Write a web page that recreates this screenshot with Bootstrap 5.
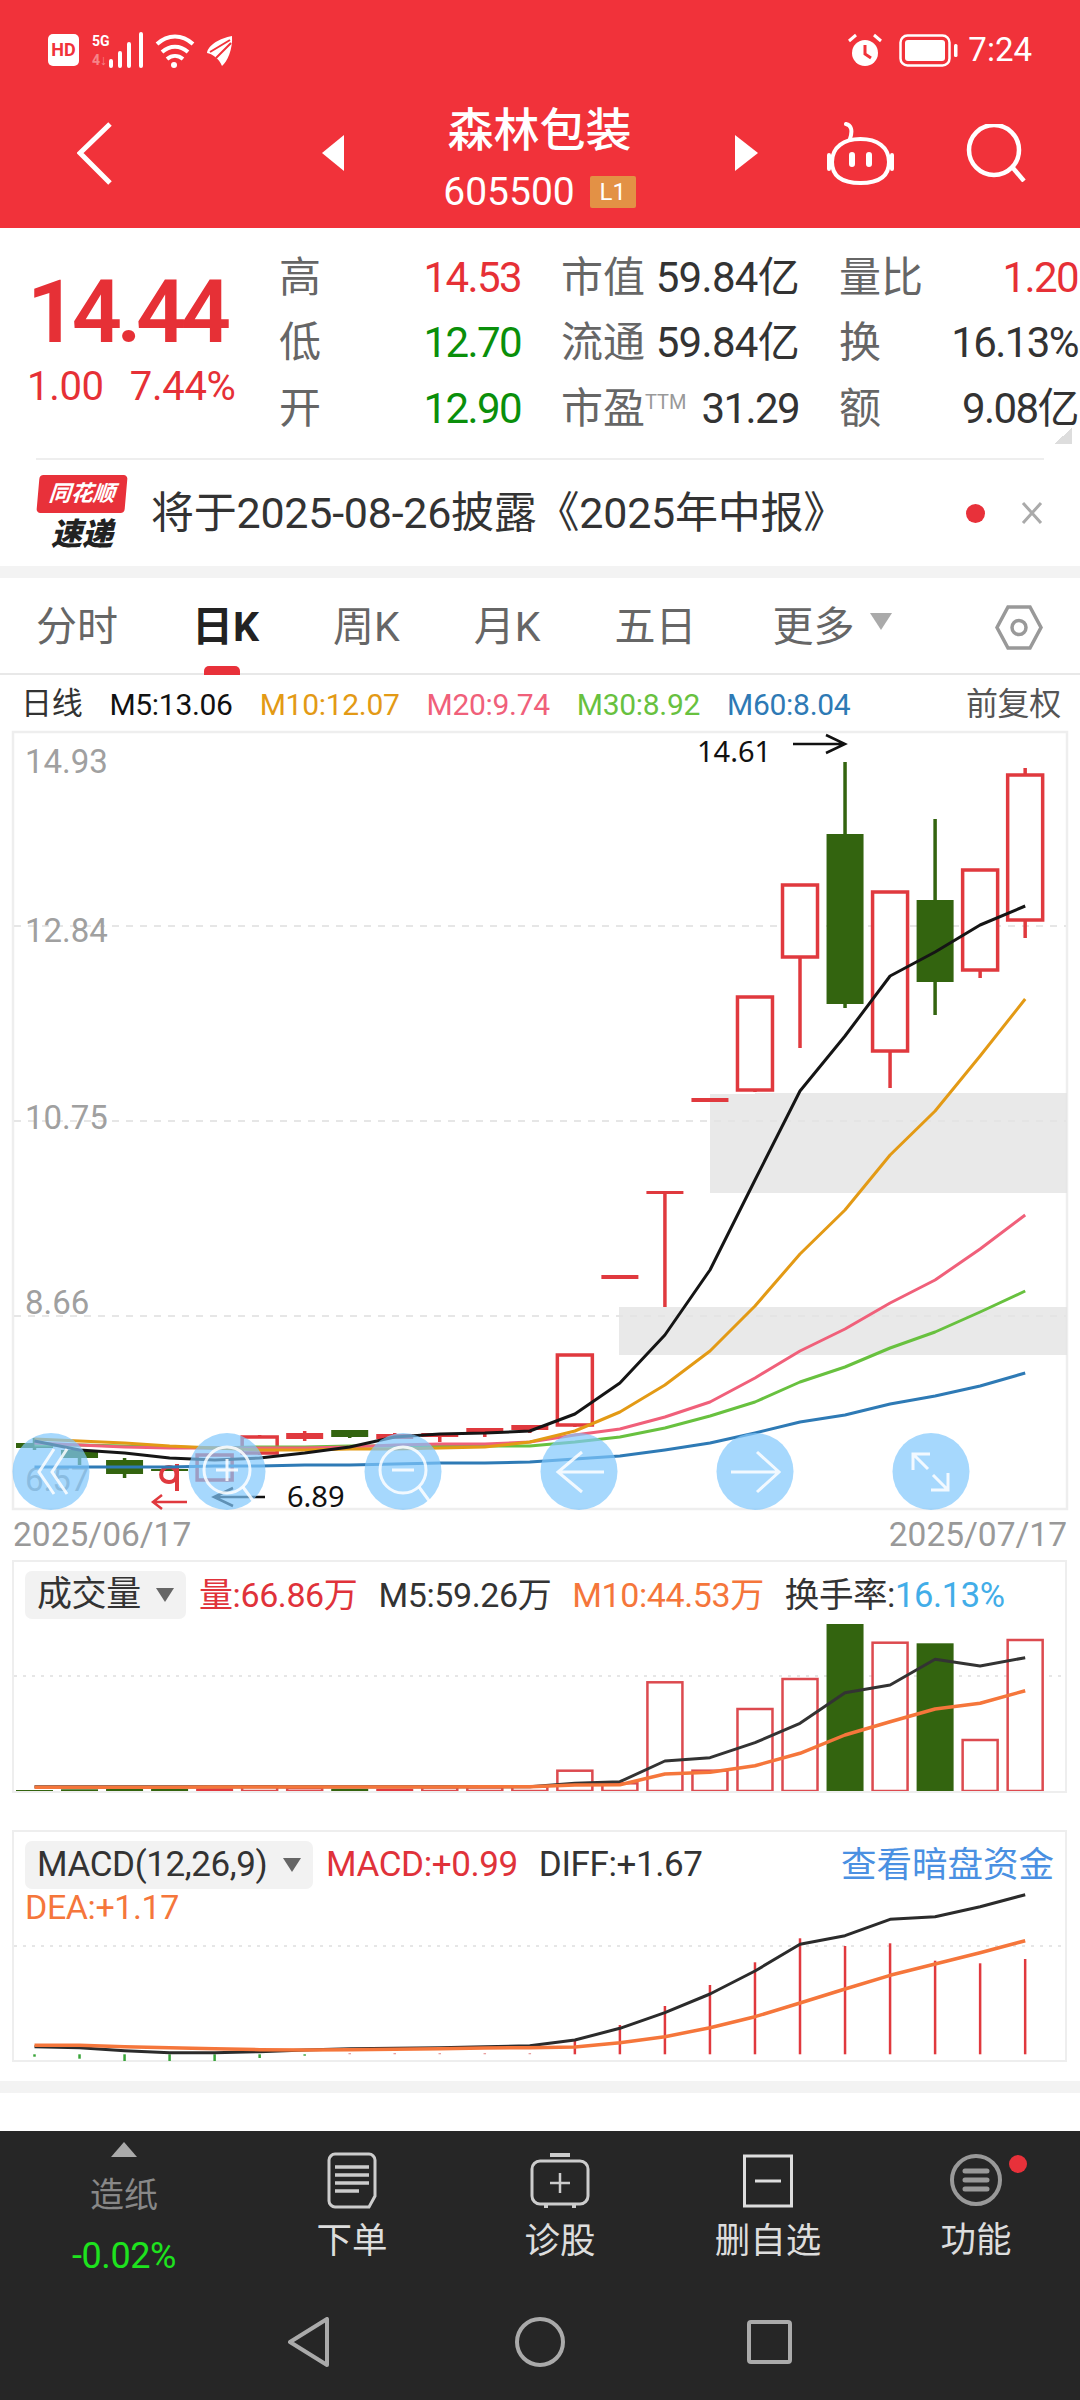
<!DOCTYPE html>
<html lang="zh-CN">
<head>
  <meta charset="UTF-8">
  <meta name="viewport" content="width=device-width, initial-scale=1.0">
  <title>森林包装 - 日K</title>
  <link href="https://cdn.jsdelivr.net/npm/bootstrap@5.3.0/dist/css/bootstrap.min.css" rel="stylesheet">
  <style>
    body {
      width: 1080px;
      height: 2400px;
      overflow: hidden;
      background: #fff;
      font-family: Roboto, "Noto Sans CJK SC", sans-serif;
      color: #333;
    }
    svg { display: block; flex: none; }

    /* 顶部红色区域 */
    .app-head { height: 228px; background: #f1323a; color: #fff; }
    .status-bar { height: 100px; padding: 0 48px; }
    .clock { font-size: 33px; margin-left: 10px; }
    .title-row { height: 106px; padding-left: 77px; }
    .stock-box { width: 391px; text-align: center; }
    .stock-name { font-size: 46px; line-height: 78px; height: 78px; font-weight: 500; }
    .stock-code { font-size: 39px; height: 46px; line-height: 46px; gap: 15px; }
    .level-tag { width: 46px; height: 32px; line-height: 32px; background: #e39145; font-size: 24px; border-radius: 2px; }

    /* 行情数据 */
    .quote-wrap { height: 230px; padding-top: 17px; }
    .price-box { width: 279px; padding-left: 27px; }
    .price-now { font-size: 88px; line-height: 100px; margin-top: 17px; font-weight: 600; letter-spacing: -5.5px; color: #e63036; }
    .price-sub { font-size: 40px; line-height: 50px; letter-spacing: -.3px; color: #e63036; gap: 26px; }
    .quote-grid { display: grid; grid-template-columns: 242px 238px 239px; column-gap: 40px; grid-auto-rows: 65.5px; font-size: 42px; }
    .quote-cell { display: flex; justify-content: space-between; align-items: center; line-height: 1; color: #666; white-space: nowrap; }
    .quote-cell b { font-weight: 400; letter-spacing: -1.6px; color: #333; }
    .quote-cell b.up { color: #e63036; }
    .quote-cell b.down { color: #0a8f0a; }
    .quote-cell b.yi-val { letter-spacing: -.7px; }
    .ttm { font-size: 20px; color: #999; vertical-align: 14px; }
    .corner-mark { right: 8px; bottom: 14px; width: 18px; height: 16px; background: linear-gradient(to bottom right, transparent 50%, #ddd 50%); }

    .thin-rule { height: 2px; margin: 0 36px; background: #eee; }
    .notice-row { height: 106px; padding: 0 37px 0 38px; }
    .logo-box { width: 88px; margin-right: 25px; }
    .logo-top { height: 38px; background: #e8313a; color: #fff; font-size: 22px; line-height: 38px; font-weight: 700; font-style: italic; text-align: center; transform: skewX(-5deg); border-radius: 4px; white-space: nowrap; }
    .logo-bottom { font-size: 31px; line-height: 34px; margin-top: 5px; font-weight: 900; font-style: italic; color: #222; text-align: center; }
    .notice-text { font-size: 43px; letter-spacing: -.25px; white-space: nowrap; color: #333; }
    .red-dot { width: 19px; height: 19px; background: #e8313a; border-radius: 50%; margin-right: 36px; }
    .gray-band { height: 12px; background: #f3f3f3; }

    /* 周期切换 */
    .period-tabs { height: 97px; padding: 4px 37px 0 36px; border-bottom: 2px solid #e8e8e8; font-size: 41px; gap: 74px; color: #666; }
    .period-on { color: #222; font-weight: 700; }
    .period-on::after { content: ""; position: absolute; left: 12px; bottom: -17px; width: 36px; height: 9px; border-radius: 5px 5px 0 0; background: #e8313a; }
    .more-arrow { margin-left: 15px; margin-top: -12px; width: 0; height: 0; border-left: 11px solid transparent; border-right: 11px solid transparent; border-top: 17px solid #aaa; }

    .ma-row { height: 56px; padding: 2px 19px 0 21px; gap: 27px; font-size: 30px; letter-spacing: -.3px; white-space: nowrap; }
    .ma-title { color: #333; font-size: 31px; }
    .ma-m5 { color: #111; } .ma-m10 { color: #e39a15; } .ma-m20 { color: #f0607a; } .ma-m30 { color: #68c13f; } .ma-m60 { color: #2e7ab5; }
    .fq-label { font-size: 32px; color: #555; }

    #klineChart { overflow: visible; }
    .date-row { height: 50px; padding: 0 13px; font-size: 33.500px; color: #999; }

    /* 副图 */
    .sub-panel { margin: 0 13px 0 12px; border: 2px solid #eee; }
    .vol-panel { height: 233px; }
    .macd-panel { height: 232px; margin-top: 37px; }
    .sub-legend { padding: 9px 0 0 11px; gap: 21px; font-size: 34px; letter-spacing: -.4px; white-space: nowrap; line-height: 48px; }
    .drop-btn { height: 48px; padding: 0 12px; margin-right: -8px; background: #f2f2f2; border-radius: 7px; color: #333; justify-content: space-between; font-size: 35px; }
    .btn-vol { width: 161px; }
    .btn-macd { width: 288px; }
    .drop-arrow { width: 0; height: 0; border-left: 9px solid transparent; border-right: 9px solid transparent; border-top: 14px solid #666; }
    .c-red { color: #e0323a; } .c-org { color: #f5763b; } .c-sky { color: #42ade8; } .c-link { color: #4a90e2; }
    .diff-val { font-size: 35px; }
    .turn-rate { font-size: 34.500px; }
    .dark-link { font-size: 35.500px; padding-right: 11px; letter-spacing: 0; }
    .dea-line { padding-left: 11px; font-size: 34px; line-height: 36px; height: 36px; letter-spacing: -.4px; }
    .macd-chart { margin-top: -36px; }

    .gap-band { margin-top: 19px; }
    .white-gap { height: 38px; }

    /* 底部工具栏 */
    .dock { height: 269px; background: #262626; }
    .dock-tabs { height: 165px; }
    .dock-first { width: 248px; text-align: center; }
    .dock-up { margin: 11px auto 0; width: 0; height: 0; border-left: 13px solid transparent; border-right: 13px solid transparent; border-bottom: 15px solid #aaa; }
    .dock-sector { font-size: 34px; line-height: 50px; margin-top: 13px; color: #888; }
    .dock-change { font-size: 36px; line-height: 50px; margin-top: 11px; color: #1ee31e; letter-spacing: -.4px; }
    .dock-item { width: 208px; padding-top: 21px; text-align: center; color: #ddd; font-size: 35.500px; }
    .dock-item svg { margin: 0 auto; }
    .dock-item span { display: block; line-height: 50px; margin-top: 7px; }
    .dock-badge { left: 137px; top: 24px; width: 18px; height: 18px; background: #e8313a; border-radius: 50%; }
    .sys-nav { height: 92px; padding-left: 288px; }
  </style>
</head>
<body>

  <!-- 顶部 -->
  <header class="app-head">
    <div class="status-bar d-flex align-items-center">
      <svg width="186" height="36" viewBox="48 32 186 36">
        <rect x="48" y="34" width="31" height="32" rx="5" fill="#fff"/>
        <text x="63.5" y="56" font-size="18" font-weight="700" font-family="Roboto" text-anchor="middle" fill="#f1323a">HD</text>
        <text x="92" y="46" font-size="14" font-weight="700" font-family="Roboto" fill="#fff">5G</text>
        <text x="92" y="65" font-size="14" font-weight="700" font-family="Roboto" fill="#fff" opacity=".4">4↓</text>
        <path d="M111 66v-5M120 66v-13M129 66v-22M141 66V34" stroke="#fff" stroke-width="4" stroke-linecap="round"/>
        <path d="M157 44c11-10 25-10 36 0M162 52c8-7 18-7 26 0M167 59c5-4 11-4 16 0" fill="none" stroke="#fff" stroke-width="4"/>
        <circle cx="174" cy="65" r="3" fill="#fff"/>
        <path d="M232 36c-12 2-24 9-25 17 5 1 12 5 15 13 5-4 11-17 10-30z" fill="#fff"/>
        <path d="M210 52l20-12M216 58l15-15" stroke="#f1323a" stroke-width="2"/>
      </svg>
      <div class="ms-auto d-flex align-items-center">
        <svg width="36" height="34" viewBox="0 0 36 34">
          <circle cx="18" cy="20" r="13" fill="#fff"/>
          <path d="M18 12v9l6 4" fill="none" stroke="#f1323a" stroke-width="3"/>
          <path d="M2 8l7-6M34 8l-7-6" stroke="#fff" stroke-width="3"/>
        </svg>
        <svg class="ms-3" width="59" height="33" viewBox="0 0 59 33">
          <rect x="1.5" y="1.5" width="49" height="30" rx="7" fill="none" stroke="#fff" stroke-width="2.5"/>
          <rect x="6" y="6" width="40" height="21" rx="3" fill="#fff"/>
          <rect x="55" y="10" width="3.5" height="13" rx="1.5" fill="#fff"/>
        </svg>
        <span class="clock">7:24</span>
      </div>
    </div>
    <div class="title-row d-flex align-items-center">
      <svg width="35" height="63" viewBox="0 0 35 63"><path d="M33 2L3 31l30 30" fill="none" stroke="#fff" stroke-width="5"/></svg>
      <svg style="margin-left:210px" width="22" height="36" viewBox="0 0 22 36"><path d="M22 0v36L0 18z" fill="#fff"/></svg>
      <div class="stock-box">
        <div class="stock-name">森林包装</div>
        <div class="stock-code d-flex justify-content-center align-items-center">605500<span class="level-tag">L1</span></div>
      </div>
      <svg width="23" height="36" viewBox="0 0 23 36"><path d="M0 0v36l23-18z" fill="#fff"/></svg>
      <svg style="margin-left:68px" width="69" height="63" viewBox="0 0 69 63">
        <path d="M20 2c5 1 7 6 4 15" fill="none" stroke="#fff" stroke-width="4" stroke-linecap="round"/>
        <path d="M6 40C6 25 18 17 34.500 17S63 25 63 40c0 14-9 21-28.500 21S6 54 6 40z" fill="none" stroke="#fff" stroke-width="4"/>
        <path d="M3 33v14M66 33v14" stroke="#fff" stroke-width="4" stroke-linecap="round"/>
        <path d="M26 33v9M43 33v9" stroke="#fff" stroke-width="6" stroke-linecap="round"/>
      </svg>
      <svg style="margin-left:71px" width="60" height="58" viewBox="0 0 60 58">
        <circle cx="28" cy="26" r="25" fill="none" stroke="#fff" stroke-width="4.500"/>
        <path d="M47 44l11 13" stroke="#fff" stroke-width="4.500"/>
      </svg>
    </div>
  </header>

  <!-- 行情数据 -->
  <section class="quote-wrap d-flex position-relative">
    <div class="price-box">
      <div class="price-now">14.44</div>
      <div class="price-sub d-flex"><span>1.00</span><span>7.44%</span></div>
    </div>
    <div class="quote-grid">
      <div class="quote-cell">高<b class="up">14.53</b></div>
      <div class="quote-cell">市值<b class="yi-val">59.84亿</b></div>
      <div class="quote-cell">量比<b class="up">1.20</b></div>
      <div class="quote-cell">低<b class="down">12.70</b></div>
      <div class="quote-cell">流通<b class="yi-val">59.84亿</b></div>
      <div class="quote-cell">换<b>16.13%</b></div>
      <div class="quote-cell">开<b class="down">12.90</b></div>
      <div class="quote-cell"><span>市盈<span class="ttm">TTM</span></span><b>31.29</b></div>
      <div class="quote-cell">额<b>9.08亿</b></div>
    </div>
    <div class="corner-mark position-absolute"></div>
  </section>
  <div class="thin-rule"></div>

  <div class="notice-row d-flex align-items-center">
    <div class="logo-box">
      <div class="logo-top">同花顺</div>
      <div class="logo-bottom">速递</div>
    </div>
    <div class="notice-text">将于2025-08-26披露《2025年中报》</div>
    <div class="red-dot ms-auto"></div>
    <svg width="22" height="22" viewBox="0 0 22 22"><path d="M2 1l18 20M20 1L2 21" stroke="#aaa" stroke-width="3"/></svg>
  </div>
  <div class="gray-band"></div>

  <!-- 周期切换 -->
  <div class="period-tabs d-flex align-items-center">
    <span>分时</span>
    <span class="period-on position-relative">日K</span>
    <span>周K</span>
    <span>月K</span>
    <span>五日</span>
    <span class="d-flex align-items-center" style="margin-left:2px">更多<i class="more-arrow"></i></span>
    <svg class="ms-auto" width="48" height="45" viewBox="0 0 48 45">
      <path d="M13 2h22l11 20.500L35 43H13L2 22.500z" fill="none" stroke="#999" stroke-width="3.500"/>
      <circle cx="24" cy="22.500" r="7" fill="none" stroke="#999" stroke-width="3.500"/>
    </svg>
  </div>

  <div class="ma-row d-flex align-items-center">
    <span class="ma-title">日线</span>
    <span class="ma-m5">M5:13.06</span>
    <span class="ma-m10">M10:12.07</span>
    <span class="ma-m20">M20:9.74</span>
    <span class="ma-m30">M30:8.92</span>
    <span class="ma-m60">M60:8.04</span>
    <span class="fq-label ms-auto">前复权</span>
  </div>

  <!-- K线主图 -->
  <svg id="klineChart" width="1056" height="779" viewBox="12 731 1056 779" style="margin-left:12px"></svg>

  <div class="date-row d-flex justify-content-between align-items-center">
    <span>2025/06/17</span><span>2025/07/17</span>
  </div>

  <!-- 成交量 -->
  <div class="sub-panel vol-panel">
    <div class="sub-legend d-flex">
      <span class="drop-btn btn-vol d-flex align-items-center">成交量<i class="drop-arrow"></i></span>
      <span class="c-red">量:66.86万</span>
      <span>M5:59.26万</span>
      <span class="c-org">M10:44.53万</span>
      <span class="turn-rate">换手率:<span class="c-sky">16.13%</span></span>
    </div>
    <svg id="volChart" width="1051" height="172" viewBox="14 1619 1051 172"></svg>
  </div>

  <!-- MACD -->
  <div class="sub-panel macd-panel">
    <div class="sub-legend d-flex">
      <span class="drop-btn btn-macd d-flex align-items-center">MACD(12,26,9)<i class="drop-arrow"></i></span>
      <span class="c-red diff-val">MACD:+0.99</span>
      <span class="diff-val">DIFF:+1.67</span>
      <span class="c-link dark-link ms-auto">查看暗盘资金</span>
    </div>
    <div class="dea-line c-org">DEA:+1.17</div>
    <svg id="macdChart" class="macd-chart" width="1051" height="172" viewBox="14 1889 1051 172"></svg>
  </div>

  <div class="gray-band gap-band"></div>
  <div class="white-gap"></div>

  <!-- 底部工具栏 -->
  <footer class="dock">
    <div class="dock-tabs d-flex">
      <div class="dock-first">
        <div class="dock-up"></div>
        <div class="dock-sector">造纸</div>
        <div class="dock-change">-0.02%</div>
      </div>
      <div class="dock-item">
        <svg width="50" height="57" viewBox="0 0 50 57">
          <path d="M8 2h34c3 0 6 3 6 6v36l-6 11H8c-3 0-6-3-6-6V8c0-3 3-6 6-6z" fill="none" stroke="#ccc" stroke-width="3"/>
          <path d="M8 15h34M8 23h34M8 31h34M8 39h24" stroke="#ccc" stroke-width="3.500"/>
        </svg>
        <span>下单</span>
      </div>
      <div class="dock-item">
        <svg width="60" height="57" viewBox="0 0 60 57">
          <path d="M20 3h20M16 56v-5M44 56v-5" stroke="#ccc" stroke-width="4"/>
          <rect x="2" y="9" width="56" height="43" rx="8" fill="none" stroke="#ccc" stroke-width="3"/>
          <path d="M30 21v20M20 31h20" stroke="#ccc" stroke-width="2.500"/>
        </svg>
        <span>诊股</span>
      </div>
      <div class="dock-item">
        <svg width="50" height="57" viewBox="0 0 50 57">
          <rect x="1.500" y="4" width="47" height="50" fill="none" stroke="#ddd" stroke-width="3"/>
          <path d="M12 29h26" stroke="#ddd" stroke-width="3"/>
        </svg>
        <span>删自选</span>
      </div>
      <div class="dock-item position-relative">
        <svg width="52" height="56" viewBox="0 0 52 56">
          <circle cx="26" cy="28" r="24" fill="none" stroke="#999" stroke-width="4"/>
          <path d="M15 19h22M15 28h22M15 37h22" stroke="#999" stroke-width="5" stroke-linecap="round"/>
        </svg>
        <div class="dock-badge position-absolute"></div>
        <span>功能</span>
      </div>
    </div>
    <div class="sys-nav d-flex align-items-center">
      <svg width="41" height="50" viewBox="0 0 41 50"><path d="M39 2v46L2 25z" fill="none" stroke="#aaa" stroke-width="4" stroke-linejoin="round"/></svg>
      <svg style="margin-left:186px" width="50" height="50" viewBox="0 0 50 50"><circle cx="25" cy="25" r="23" fill="none" stroke="#aaa" stroke-width="4"/></svg>
      <svg style="margin-left:182px" width="45" height="46" viewBox="0 0 45 46"><rect x="2" y="3" width="41" height="40" rx="2" fill="none" stroke="#aaa" stroke-width="4"/></svg>
    </div>
  </footer>

  <script src="https://cdn.jsdelivr.net/npm/bootstrap@5.3.0/dist/js/bootstrap.bundle.min.js"></script>
  <script>
    const RED = '#e0393e', GREEN = '#33640f';
    const xAt = i => 34.5 + 45.03 * i;

    // 折线
    function polyline(values, color, width) {
      const pts = values.map((y, i) => xAt(i).toFixed(1) + ',' + y).join(' ');
      return `<polyline points="${pts}" fill="none" stroke="${color}" stroke-width="${width}" stroke-linejoin="round"/>`;
    }

    // K线数据: 开收上下沿 top/bottom, 影线 hi/lo, hollow 为空心阳线
    const candles = [
      { c: GREEN, top: 1443, bottom: 1448, hi: 1438, lo: 1450 },
      { c: GREEN, top: 1450, bottom: 1458, hi: 1450, lo: 1465 },
      { c: GREEN, top: 1460, bottom: 1474, hi: 1458, lo: 1478 },
      { c: GREEN, top: 1469, bottom: 1471, hi: 1469, lo: 1471 },
      { c: RED, top: 1455, bottom: 1480, hi: 1455, lo: 1480, hollow: true },
      { c: RED, top: 1437, bottom: 1453, hi: 1435, lo: 1455, hollow: true },
      { c: RED, top: 1433, bottom: 1439, hi: 1431, lo: 1441 },
      { c: GREEN, top: 1430, bottom: 1437, hi: 1430, lo: 1438 },
      { c: RED, top: 1434, bottom: 1439, hi: 1433, lo: 1439 },
      { c: RED, top: 1433, bottom: 1437, hi: 1433, lo: 1442 },
      { c: RED, top: 1428, bottom: 1433, hi: 1428, lo: 1437 },
      { c: RED, top: 1425, bottom: 1430, hi: 1425, lo: 1433 },
      { c: RED, top: 1355, bottom: 1425, hi: 1355, lo: 1427, hollow: true },
      { c: RED, top: 1275, bottom: 1279, hi: 1275, lo: 1279 },
      { c: RED, top: 1191, bottom: 1194, hi: 1191, lo: 1307 },
      { c: RED, top: 1098, bottom: 1102, hi: 1098, lo: 1102 },
      { c: RED, top: 997, bottom: 1090, hi: 997, lo: 1092, hollow: true },
      { c: RED, top: 885, bottom: 957, hi: 885, lo: 1048, hollow: true },
      { c: GREEN, top: 834, bottom: 1004, hi: 762, lo: 1008 },
      { c: RED, top: 892, bottom: 1051, hi: 892, lo: 1088, hollow: true },
      { c: GREEN, top: 900, bottom: 982, hi: 819, lo: 1015 },
      { c: RED, top: 870, bottom: 970, hi: 870, lo: 978, hollow: true },
      { c: RED, top: 775, bottom: 920, hi: 768, lo: 938, hollow: true }
    ];

    const ma5 = [1441,1450,1453,1458,1460,1458,1453,1447,1437,1434,1433,1431,1414,1383,1335,1270,1180,1091,1036,976,952,925,906];
    const ma10 = [1439,1441,1443,1446,1448,1450,1450,1449,1449,1448,1447,1442,1431,1412,1385,1351,1306,1254,1210,1155,1111,1056,999];
    const ma20 = [1443,1445,1447,1448,1448,1448,1448,1447,1445,1444,1444,1442,1435,1429,1417,1402,1378,1351,1329,1303,1280,1249,1215];
    const ma30 = [1445,1445,1446,1447,1448,1447,1447,1446,1446,1446,1446,1446,1442,1437,1428,1416,1402,1382,1367,1348,1332,1312,1291];
    const ma60 = [1467,1467,1467,1467,1466,1466,1465,1465,1464,1463,1463,1462,1459,1456,1450,1443,1433,1422,1415,1404,1396,1386,1373];

    function drawKline() {
      let s = '<rect x="13" y="732" width="1054" height="777" fill="#fff" stroke="#eee" stroke-width="2.500"/>';
      [926, 1121, 1316].forEach(y => {
        s += `<path d="M14 ${y}H1066" stroke="#e6e6e6" stroke-width="2" stroke-dasharray="7 7"/>`;
      });
      s += '<rect x="710" y="1093" width="357" height="100" fill="#e3e3e3" opacity=".8"/>';
      s += '<rect x="619" y="1307" width="448" height="48" fill="#e3e3e3" opacity=".8"/>';
      s += '<rect x="710" y="1086" width="45" height="8" fill="#fff"/>';

      [['14.93', 773], ['12.84', 942], ['10.75', 1129], ['8.66', 1314], ['6.57', 1491]].forEach(([t, y]) => {
        s += `<text x="25" y="${y}" font-size="33" fill="#a0a0a0" font-family="Roboto">${t}</text>`;
      });

      candles.forEach((k, i) => {
        const x = xAt(i);
        s += `<path d="M${x} ${k.hi}V${k.lo}" stroke="${k.c}" stroke-width="3.500"/>`;
        if (k.hollow) {
          s += `<rect x="${x - 17.5}" y="${k.top}" width="35" height="${k.bottom - k.top}" fill="#fff" stroke="${k.c}" stroke-width="3.500"/>`;
        } else {
          s += `<rect x="${x - 18.5}" y="${k.top}" width="37" height="${k.bottom - k.top}" fill="${k.c}"/>`;
        }
      });

      // 最低价附近的红色小标记
      s += `<path d="M169 1467c-10 0-11 15 0 15 10 0 10-15 0-15zM177 1464v27" fill="none" stroke="${RED}" stroke-width="4"/>`;
      s += `<path d="M187 1502H153m9-7l-9 7 9 7" fill="none" stroke="${RED}" stroke-width="2.500"/>`;

      s += polyline(ma60, '#2e7ab5', 3);
      s += polyline(ma30, '#68c13f', 3);
      s += polyline(ma20, '#f0607a', 3);
      s += polyline(ma10, '#e39a15', 3);
      s += polyline(ma5, '#151515', 3);

      // 最高最低标注
      s += '<text x="697" y="762" font-size="29" fill="#111" font-family="Noto Sans">14.61</text>';
      s += '<path d="M793 744H845M826 735l19 9-19 9" fill="none" stroke="#111" stroke-width="2.500"/>';
      s += '<text x="287" y="1507" font-size="29" fill="#111" font-family="Noto Sans">6.89</text>';
      s += '<path d="M265 1497H214M233 1488l-19 9 19 9" fill="none" stroke="#111" stroke-width="2.500"/>';

      // 悬浮按钮
      const cx = [51, 227, 403, 579, 755, 931];
      cx.forEach(x => {
        s += `<circle cx="${x}" cy="1471.5" r="38.500" fill="rgb(128,200,252)" opacity=".7"/>`;
      });
      const wh = 'fill="none" stroke="#fff" stroke-opacity=".85" stroke-width="3"';
      s += `<path d="M54 1449l-15 23 15 22M67 1449l-15 23 15 22" ${wh}/>`;
      s += `<circle cx="227" cy="1470" r="23" ${wh}/><path d="M243 1487l11 15M216 1470h22M227 1459v22" ${wh}/>`;
      s += `<circle cx="403" cy="1470" r="23" ${wh}/><path d="M419 1487l11 15M392 1470h22" ${wh}/>`;
      s += `<path d="M604 1472H558M582 1452l-24 20 24 20" ${wh}/>`;
      s += `<path d="M731 1472H779M757 1452l22 20-22 20" ${wh}/>`;
      s += `<path d="M913 1470v-16h17M914 1455l14 14M948 1473v17h-17M947 1489l-14-14" ${wh}/>`;
      document.getElementById('klineChart').innerHTML = s;
    }

    // 成交量
    const volTop = [690,688,687,686,685,680,684,686,686,682,682,680,632,670,367,632,447,357,192,248,250,540,240];
    const volKind = 'ggggfhhgfhhhhhhhhhghghh'; // g 绿实心 f 红实心 h 红空心
    const volM5 = [680,680,680,680,680,680,680,680,680,680,680,680,670,665,603,593,548,490,398,375,298,318,293];
    const volM10 = [682,682,682,682,681,681,681,681,681,681,680,680,675,674,642,637,617,580,525,485,447,430,392];

    function drawVolume() {
      const y = z => +(1560 + z / 3).toFixed(1);
      let s = `<path d="M14 1676H1065" stroke="#e6e6e6" stroke-width="2" stroke-dasharray="3 6"/>`;
      volTop.forEach((z, i) => {
        const x = xAt(i), top = y(z), kind = volKind[i];
        if (kind === 'h') {
          s += `<rect x="${x - 17.5}" y="${top}" width="35" height="${1791 - top}" fill="#fff" stroke="#dc4a4f" stroke-width="2.500"/>`;
        } else {
          s += `<rect x="${x - 18.5}" y="${top}" width="37" height="${1793 - top}" fill="${kind === 'g' ? GREEN : RED}"/>`;
        }
      });
      s += polyline(volM5.map(y), '#333', 3);
      s += polyline(volM10.map(y), '#f5763b', 3.5);
      document.getElementById('volChart').innerHTML = s;
    }

    // MACD
    const macdBar = [710,716,725,727,725,714,707,699,699,699,699,699,660,615,558,495,427,355,378,370,422,430,417];
    const diff = [680,683,692,698,698,695,690,686,685,683,680,677,660,625,578,522,453,373,347,298,290,260,224];
    const dea = [676,676,680,683,686,689,690,689,688,686,684,683,681,668,650,623,590,549,507,466,432,398,362];

    function drawMacd() {
      const y = z => +(1820 + z / 3).toFixed(1);
      let s = `<path d="M14 1946H1065" stroke="#e6e6e6" stroke-width="2" stroke-dasharray="3 6"/>`;
      macdBar.forEach((z, i) => {
        const c = i < 7 ? '#3aa53a' : (i < 12 ? '#e8a0a0' : '#e0393e');
        s += `<path d="M${xAt(i)} ${y(703)}V${y(z)}" stroke="${c}" stroke-width="2.500"/>`;
      });
      s += polyline(diff.map(y), '#2b2b2b', 3);
      s += polyline(dea.map(y), '#f5763b', 3.5);
      document.getElementById('macdChart').innerHTML = s;
    }

    drawKline();
    drawVolume();
    drawMacd();
  </script>
</body>
</html>
